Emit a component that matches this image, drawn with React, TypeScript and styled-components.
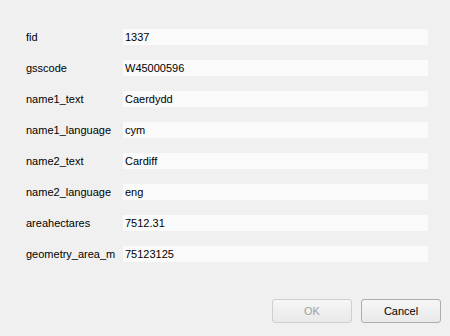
import { Fragment } from "react";
import styled, { createGlobalStyle } from "styled-components";

const GlobalStyle = createGlobalStyle`
  html, body {
    margin: 0;
    padding: 0;
    background: #f0f0f0;
  }
`;

const Dialog = styled.div`
  width: 450px;
  height: 336px;
  box-sizing: border-box;
  display: flex;
  flex-direction: column;
  justify-content: space-between;
  padding: 29px 9px 13px 26px;
  background: #f0f0f0;
  font-family: "Liberation Sans", Arial, sans-serif;
  font-size: 11px;
  color: #000;
`;

const Form = styled.div`
  display: grid;
  grid-template-columns: 97px 305px;
  grid-auto-rows: 16px;
  row-gap: 15px;
`;

const Label = styled.div`
  display: flex;
  align-items: center;
  white-space: nowrap;
`;

const Field = styled.div`
  display: flex;
  align-items: center;
  padding-left: 2px;
  background: #fafafa;
`;

const ButtonBar = styled.div`
  display: flex;
  justify-content: flex-end;
  gap: 9px;
`;

const Button = styled.button<{ $disabled?: boolean }>`
  width: 80px;
  height: 24px;
  box-sizing: border-box;
  border: 1px solid ${(p) => (p.$disabled ? "#cfcfcf" : "#acacac")};
  border-radius: 3px;
  background: linear-gradient(#f6f6f6, #e9e9e9);
  font-family: inherit;
  font-size: 11px;
  color: ${(p) => (p.$disabled ? "#a0a0a0" : "#000")};
  padding: 0;
`;

const rows: [string, string][] = [
  ["fid", "1337"],
  ["gsscode", "W45000596"],
  ["name1_text", "Caerdydd"],
  ["name1_language", "cym"],
  ["name2_text", "Cardiff"],
  ["name2_language", "eng"],
  ["areahectares", "7512.31"],
  ["geometry_area_m", "75123125"],
];

export default function App() {
  return (
    <>
      <GlobalStyle />
      <Dialog>
        <Form>
          {rows.map(([label, value]) => (
            <Fragment key={label}>
              <Label>{label}</Label>
              <Field>{value}</Field>
            </Fragment>
          ))}
        </Form>
        <ButtonBar>
          <Button $disabled disabled>OK</Button>
          <Button>Cancel</Button>
        </ButtonBar>
      </Dialog>
    </>
  );
}
